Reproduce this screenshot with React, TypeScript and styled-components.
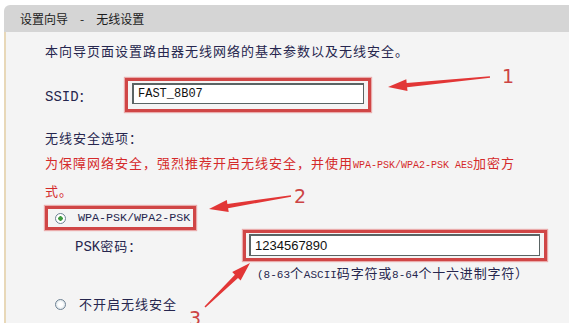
import React from "react";
import styled, { createGlobalStyle } from "styled-components";

const GlobalStyle = createGlobalStyle`
  html, body {
    margin: 0;
    padding: 0;
    background: #ffffff;
  }
  body {
    font-family: "Noto Sans CJK SC", "Liberation Sans", sans-serif;
  }
`;

const Page = styled.div`
  position: relative;
  width: 569px;
  height: 323px;
  overflow: hidden;
  background: #ffffff;
`;

const Frame = styled.div`
  margin: 5px 0 0 4px;
  display: flex;
  flex-direction: column;
  height: 318px;
`;

const TitleBar = styled.div`
  height: 27px;
  display: flex;
  align-items: center;
  padding-left: 16px;
  background: #d5d5d5;
  border-top-left-radius: 6px;
  font-size: 12px;
  color: #1c1c1c;
  white-space: pre;
`;

const Content = styled.div`
  flex: 1;
  background: #f4f4f4;
  border-left: 2px solid #e8d8b8;
  padding: 9px 0 0 39px;
  color: #26264e;
  font-size: 13px;
  letter-spacing: 1px;
`;

const Line = styled.div<{ $top?: number; $height?: number }>`
  margin-top: ${(p) => p.$top ?? 0}px;
  line-height: ${(p) => p.$height ?? 20}px;
  white-space: nowrap;
`;

const Warning = styled.div`
  margin-top: 2px;
  line-height: 25px;
  color: #d42a2a;
  white-space: nowrap;
`;

const Mono = styled.span<{ $size: number }>`
  font-family: "Liberation Mono", "DejaVu Sans Mono", monospace;
  font-size: ${(p) => p.$size}px;
  letter-spacing: 0;
`;

const FieldRow = styled.div<{ $top: number; $indent?: number }>`
  display: flex;
  align-items: center;
  margin-top: ${(p) => p.$top}px;
  padding-left: ${(p) => p.$indent ?? 0}px;
`;

const FieldLabel = styled.div<{ $width: number }>`
  width: ${(p) => p.$width}px;
  white-space: nowrap;
`;

const Highlight = styled.div<{ $pad: string }>`
  display: flex;
  align-items: center;
  padding: ${(p) => p.$pad};
  border: 3px solid #d04646;
  box-shadow: 0 0 1px 1px rgba(230, 140, 140, 0.7);
`;

const TextInput = styled.input<{ $width: number; $height: number; $font: string; $size: number }>`
  box-sizing: border-box;
  width: ${(p) => p.$width}px;
  height: ${(p) => p.$height}px;
  padding: 0 4px;
  margin: 0;
  border: 1px solid #5a6464;
  border-top-width: 2px;
  border-left-width: 2px;
  background: #ffffff;
  color: #111111;
  font-family: ${(p) => p.$font};
  font-size: ${(p) => p.$size}px;
  outline: none;
`;

const RadioBox = styled.div`
  display: flex;
  align-items: center;
  gap: 12px;
  width: fit-content;
  margin-top: 3px;
  height: 18px;
  padding: 0 3px 0 7px;
  border: 3px solid #d04646;
  box-shadow: 0 0 1px 1px rgba(230, 140, 140, 0.7);
  white-space: nowrap;
`;

const RadioRow = styled.div`
  display: flex;
  align-items: center;
  gap: 13px;
  margin-top: 11px;
  padding-left: 10px;
  line-height: 20px;
`;

const Radio = styled.span<{ $checked?: boolean }>`
  box-sizing: border-box;
  width: 11px;
  height: 11px;
  border-radius: 50%;
  border: 1px solid #6e8294;
  background: ${(p) =>
    p.$checked
      ? "radial-gradient(circle, #3e9a3e 0 2px, #ffffff 2.5px)"
      : "radial-gradient(circle, #ffffff 0 2px, #e6ecef 4px)"};
  flex: none;
`;

const Hint = styled.div`
  margin: 4px 0 0 212px;
  line-height: 16px;
  font-size: 13px;
  letter-spacing: 0.8px;
  white-space: nowrap;
`;

const Overlay = styled.svg`
  position: absolute;
  left: 0;
  top: 0;
  pointer-events: none;
`;

const Callout = styled.span<{ $x: number; $y: number }>`
  position: absolute;
  left: ${(p) => p.$x}px;
  top: ${(p) => p.$y}px;
  font-family: "DejaVu Sans", "Liberation Sans", sans-serif;
  font-size: 19px;
  line-height: 1;
  color: #cc4444;
`;

const arrowPoints = (x1: number, y1: number, x2: number, y2: number) => {
  const dx = x2 - x1;
  const dy = y2 - y1;
  const len = Math.hypot(dx, dy);
  const ux = dx / len;
  const uy = dy / len;
  const nx = -uy;
  const ny = ux;
  const headLen = 19;
  const headW = 6;
  const bx = x2 - ux * headLen;
  const by = y2 - uy * headLen;
  const pts = [
    [x1 + nx * 0.7, y1 + ny * 0.7],
    [bx + nx * 2.2, by + ny * 2.2],
    [bx + nx * headW, by + ny * headW],
    [x2, y2],
    [bx - nx * headW, by - ny * headW],
    [bx - nx * 2.2, by - ny * 2.2],
    [x1 - nx * 0.7, y1 - ny * 0.7],
  ];
  return pts.map((p) => p.map((v) => v.toFixed(1)).join(",")).join(" ");
};

const arrows = [
  { from: [490, 77], to: [388, 87] },
  { from: [291, 196], to: [209, 209] },
  { from: [205, 307], to: [250, 263] },
];

export default function App() {
  return (
    <Page>
      <GlobalStyle />
      <Frame>
        <TitleBar>设置向导{"\u3000"}-{"\u3000"}无线设置</TitleBar>
        <Content>
          <Line>本向导页面设置路由器无线网络的基本参数以及无线安全。</Line>
          <FieldRow $top={17}>
            <FieldLabel $width={80}>
              <Mono $size={14}>SSID</Mono>：
            </FieldLabel>
            <Highlight $pad="2px 4px 5px 4px">
              <TextInput
                readOnly
                value="FAST_8B07"
                $width={232}
                $height={21}
                $font={'"Liberation Mono", monospace'}
                $size={12}
              />
            </Highlight>
          </FieldRow>
          <Line $top={16}>无线安全选项：</Line>
          <Warning>
            为保障网络安全，强烈推荐开启无线安全，并使用
            <Mono $size={10}>WPA-PSK/WPA2-PSK AES</Mono>加密方
            <br />
            式。
          </Warning>
          <RadioBox>
            <Radio $checked />
            <Mono $size={11.7}>WPA-PSK/WPA2-PSK</Mono>
          </RadioBox>
          <FieldRow $top={0} $indent={30}>
            <FieldLabel $width={168}>
              <Mono $size={14}>PSK</Mono>密码：
            </FieldLabel>
            <Highlight $pad="1px 4px 2px 3px">
              <TextInput
                readOnly
                value="1234567890"
                $width={291}
                $height={22}
                $font={'"Liberation Sans", Arial, sans-serif'}
                $size={13}
              />
            </Highlight>
          </FieldRow>
          <Hint>
            <Mono $size={11}>(8-63</Mono>个<Mono $size={11}>ASCII</Mono>码字符或
            <Mono $size={11}>8-64</Mono>个十六进制字符）
          </Hint>
          <RadioRow>
            <Radio />
            <span>不开启无线安全</span>
          </RadioRow>
        </Content>
      </Frame>
      <Overlay width={569} height={323} viewBox="0 0 569 323">
        {arrows.map((a, i) => (
          <polygon
            key={i}
            points={arrowPoints(a.from[0], a.from[1], a.to[0], a.to[1])}
            fill="#e23636"
          />
        ))}
      </Overlay>
      <Callout $x={502} $y={67}>1</Callout>
      <Callout $x={294} $y={187}>2</Callout>
      <Callout $x={189} $y={309}>3</Callout>
    </Page>
  );
}
